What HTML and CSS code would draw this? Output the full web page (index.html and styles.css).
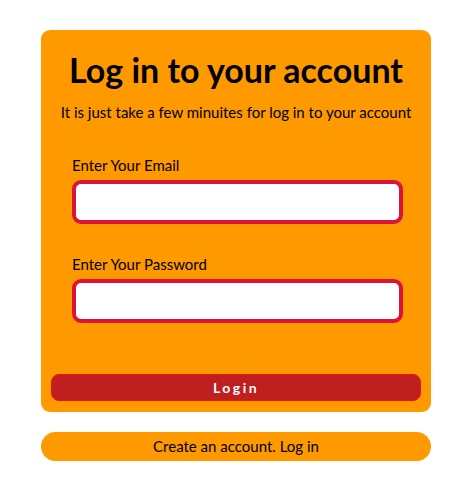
FILE: index.html
```html
<!DOCTYPE html>
<html>
<head>
<meta charset="utf-8">
<link rel="stylesheet" href="styles.css">
</head>
<body>
<div class="page">
  <form class="card">
    <h1 class="title">Log in to your account</h1>
    <p class="subtitle">It is just take a few minuites for log in to your account</p>
    <div class="field">
      <label class="label">Enter Your Email</label>
      <input class="input" type="email">
    </div>
    <div class="field">
      <label class="label">Enter Your Password</label>
      <input class="input" type="password">
    </div>
    <button class="login" type="button">Login</button>
  </form>
  <div class="create">Create an account. Log in</div>
</div>
</body>
</html>
```
FILE: styles.css
```css
html, body { margin: 0; padding: 0; background: #fff; }
body { font-family: Lato, "Open Sans", sans-serif; color: #000; }
.page {
  width: 390px;
  padding: 30px 0 0 41px;
  display: flex;
  flex-direction: column;
  gap: 20px;
}
.card {
  background: #ff9900;
  border-radius: 9px;
  padding: 22px 10px 11px 10px;
  display: flex;
  flex-direction: column;
  margin: 0;
}
.title {
  margin: 0;
  text-align: center;
  font-size: 34px;
  font-weight: 700;
  line-height: 36px;
}
.subtitle {
  margin: 15px 0 0 0;
  text-align: center;
  font-size: 15px;
  line-height: 18px;
}
.field {
  display: flex;
  flex-direction: column;
  padding: 0 18px 0 21px;
  margin-top: 35px;
}
.field + .field { margin-top: 31px; }
.label {
  font-size: 15px;
  line-height: 18px;
  margin-bottom: 6px;
}
.input {
  box-sizing: border-box;
  height: 44px;
  width: 100%;
  border: 4px solid #dc143c;
  border-radius: 9px;
  background: #fff;
  margin: 0;
  outline: none;
}
.login {
  margin-top: 51px;
  height: 27px;
  background: #bf1f1f;
  border: 1px solid #ee1111;
  border-radius: 8px;
  color: #fff;
  font-family: inherit;
  font-size: 14px;
  font-weight: 700;
  letter-spacing: 2.5px;
  padding: 0;
}
.create {
  background: #ff9900;
  border-radius: 15px;
  height: 29px;
  line-height: 29px;
  text-align: center;
  font-size: 15px;
}
```
